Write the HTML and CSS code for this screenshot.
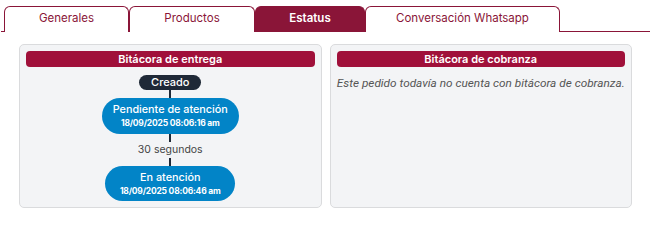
FILE: index.html
```html
<!DOCTYPE html>
<html>

<head>
  <title>Pedido - Estatus</title>
  <link rel="stylesheet" href="styles.css">
</head>

<body>
  <div class="tabs">
    <div class="tab tab-generales">Generales</div>
    <div class="tab tab-productos">Productos</div>
    <div class="tab tab-estatus active">Estatus</div>
    <div class="tab tab-whatsapp">Conversación Whatsapp</div>
  </div>

  <div class="tab-content">
    <div class="panel">
      <div class="panel-title">Bitácora de entrega</div>
      <div class="timeline">
        <div class="step-start">Creado</div>
        <div class="connector"></div>
        <div class="step">
          <div class="step-name">Pendiente de atención</div>
          <div class="step-date">18/09/2025 08:06:16 am</div>
        </div>
        <div class="connector"></div>
        <div class="elapsed">30 segundos</div>
        <div class="connector"></div>
        <div class="step step-last">
          <div class="step-name">En atención</div>
          <div class="step-date">18/09/2025 08:06:46 am</div>
        </div>
      </div>
    </div>

    <div class="panel">
      <div class="panel-title">Bitácora de cobranza</div>
      <p class="empty">Este pedido todavía no cuenta con bitácora de cobranza.</p>
    </div>
  </div>
</body>

</html>
```

FILE: styles.css
```css
body {
  margin: 0;
  padding: 6px 5px 0 1px;
  font-family: Inter, "Noto Sans", sans-serif;
  background-color: #fff;
}

.tabs {
  display: flex;
  padding-left: 3px;
  border-bottom: 1px solid #8a1538;
  height: 25px;
}

.tab {
  box-sizing: border-box;
  height: 26px;
  border: 1px solid #8a1538;
  border-bottom: none;
  border-radius: 6px 6px 0 0;
  font-size: 11.5px;
  color: #8a1538;
  text-align: center;
  line-height: 23px;
  background-color: #fff;
}

.tab-generales { width: 125px; }
.tab-productos { width: 126px; }
.tab-estatus { width: 110px; }
.tab-whatsapp { width: 195px; }

.tab.active {
  background-color: #8a1538;
  color: #fff;
  font-weight: 600;
}

.tab-content {
  display: flex;
  gap: 8px;
  padding: 12px 18px 0 18px;
}

.panel {
  box-sizing: border-box;
  width: 303px;
  height: 164px;
  background-color: #f3f4f6;
  border: 1px solid #dadbdd;
  border-radius: 5px;
  padding: 6px 6px 0 6px;
}

.panel-title {
  background-color: #a0103a;
  color: #fff;
  border-radius: 4px;
  height: 16px;
  line-height: 16px;
  font-size: 11px;
  font-weight: 600;
  text-align: center;
}

.timeline {
  display: flex;
  flex-direction: column;
  align-items: center;
  padding-top: 8px;
}

.step-start {
  background-color: #1f2937;
  color: #fff;
  font-size: 11px;
  font-weight: 500;
  height: 15px;
  line-height: 15px;
  padding: 0 12px;
  border-radius: 8px;
}

.connector {
  width: 2px;
  height: 8px;
  background-color: #1f2937;
}

.step {
  background-color: #0284c7;
  color: #fff;
  border-radius: 18px;
  width: 137px;
  height: 36px;
  box-sizing: border-box;
  padding-top: 4px;
  text-align: center;
}

.step-last {
  width: 130px;
  height: 35px;
}

.step-name {
  font-size: 10.8px;
  font-weight: 500;
  line-height: 15px;
}

.step-date {
  font-size: 8.5px;
  font-weight: 700;
  line-height: 12px;
  letter-spacing: -0.2px;
}

.elapsed {
  font-size: 10.5px;
  color: #444;
  line-height: 16px;
}

.empty {
  margin: 9px 0 0 0;
  font-family: Roboto, sans-serif;
  font-style: italic;
  font-size: 11.8px;
  color: #555;
  text-align: center;
}
```
